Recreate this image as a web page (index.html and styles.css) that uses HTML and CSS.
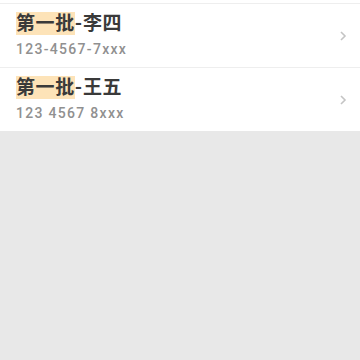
FILE: index.html
```html
<!DOCTYPE html>
<html lang="zh">
<head>
    <meta charset="utf-8">
    <link rel="stylesheet" href="styles.css">
</head>
<body>
    <!-- Lista de resultados -->
    <div class="lista">
        <div class="item">
            <div class="info">
                <div class="titulo"><span class="marca">第一批</span>-李四</div>
                <div class="telefono">123-4567-7xxx</div>
            </div>
            <svg class="flecha" width="8" height="12" viewBox="0 0 8 12"><polyline points="2,2 6,6 2,10" fill="none" stroke="#c4c4c4" stroke-width="1.6"/></svg>
        </div>
        <div class="item">
            <div class="info">
                <div class="titulo"><span class="marca">第一批</span>-王五</div>
                <div class="telefono">123 4567 8xxx</div>
            </div>
            <svg class="flecha" width="8" height="12" viewBox="0 0 8 12"><polyline points="2,2 6,6 2,10" fill="none" stroke="#c4c4c4" stroke-width="1.6"/></svg>
        </div>
    </div>
</body>
</html>
```

FILE: styles.css
```css
body {
    margin: 0;
    padding: 0;
    background-color: #e8e8e8;
    font-family: Roboto, "Noto Sans CJK SC", sans-serif;
}

.lista {
    background-color: #ffffff;
    padding-top: 3px;
}

.item {
    display: flex;
    align-items: center;
    height: 63px;
    border-top: 1px solid #eeeeee;
    padding: 0 13px 0 16px;
}

.info {
    flex: 1;
    margin-top: -4px;
}

.titulo {
    font-size: 19px;
    font-weight: 700;
    color: #3a3a3a;
    line-height: 25px;
    letter-spacing: 0.6px;
}

.marca {
    background-color: #fde3b8;
}

.telefono {
    font-size: 14px;
    font-weight: 500;
    color: #909090;
    letter-spacing: 1.3px;
    margin-top: 5px;
}

.flecha {
    display: block;
}
```
